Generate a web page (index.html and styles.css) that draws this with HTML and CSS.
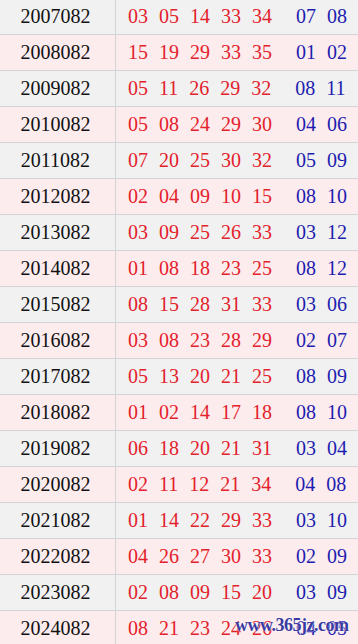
FILE: index.html
```html
<!DOCTYPE html>
<html>
<head>
<meta charset="utf-8">
<link rel="stylesheet" href="styles.css">
</head>
<body>
<div class="table">
  <div class="row odd"><div class="date">2007082</div><div class="nums"><span class="r">03</span><span class="r">05</span><span class="r">14</span><span class="r">33</span><span class="r">34</span><span class="b first">07</span><span class="b">08</span></div></div>
  <div class="row even"><div class="date">2008082</div><div class="nums"><span class="r">15</span><span class="r">19</span><span class="r">29</span><span class="r">33</span><span class="r">35</span><span class="b first">01</span><span class="b">02</span></div></div>
  <div class="row odd"><div class="date">2009082</div><div class="nums"><span class="r">05</span><span class="r">11</span><span class="r">26</span><span class="r">29</span><span class="r">32</span><span class="b first">08</span><span class="b">11</span></div></div>
  <div class="row even"><div class="date">2010082</div><div class="nums"><span class="r">05</span><span class="r">08</span><span class="r">24</span><span class="r">29</span><span class="r">30</span><span class="b first">04</span><span class="b">06</span></div></div>
  <div class="row odd"><div class="date">2011082</div><div class="nums"><span class="r">07</span><span class="r">20</span><span class="r">25</span><span class="r">30</span><span class="r">32</span><span class="b first">05</span><span class="b">09</span></div></div>
  <div class="row even"><div class="date">2012082</div><div class="nums"><span class="r">02</span><span class="r">04</span><span class="r">09</span><span class="r">10</span><span class="r">15</span><span class="b first">08</span><span class="b">10</span></div></div>
  <div class="row odd"><div class="date">2013082</div><div class="nums"><span class="r">03</span><span class="r">09</span><span class="r">25</span><span class="r">26</span><span class="r">33</span><span class="b first">03</span><span class="b">12</span></div></div>
  <div class="row even"><div class="date">2014082</div><div class="nums"><span class="r">01</span><span class="r">08</span><span class="r">18</span><span class="r">23</span><span class="r">25</span><span class="b first">08</span><span class="b">12</span></div></div>
  <div class="row odd"><div class="date">2015082</div><div class="nums"><span class="r">08</span><span class="r">15</span><span class="r">28</span><span class="r">31</span><span class="r">33</span><span class="b first">03</span><span class="b">06</span></div></div>
  <div class="row even"><div class="date">2016082</div><div class="nums"><span class="r">03</span><span class="r">08</span><span class="r">23</span><span class="r">28</span><span class="r">29</span><span class="b first">02</span><span class="b">07</span></div></div>
  <div class="row odd"><div class="date">2017082</div><div class="nums"><span class="r">05</span><span class="r">13</span><span class="r">20</span><span class="r">21</span><span class="r">25</span><span class="b first">08</span><span class="b">09</span></div></div>
  <div class="row even"><div class="date">2018082</div><div class="nums"><span class="r">01</span><span class="r">02</span><span class="r">14</span><span class="r">17</span><span class="r">18</span><span class="b first">08</span><span class="b">10</span></div></div>
  <div class="row odd"><div class="date">2019082</div><div class="nums"><span class="r">06</span><span class="r">18</span><span class="r">20</span><span class="r">21</span><span class="r">31</span><span class="b first">03</span><span class="b">04</span></div></div>
  <div class="row even"><div class="date">2020082</div><div class="nums"><span class="r">02</span><span class="r">11</span><span class="r">12</span><span class="r">21</span><span class="r">34</span><span class="b first">04</span><span class="b">08</span></div></div>
  <div class="row odd"><div class="date">2021082</div><div class="nums"><span class="r">01</span><span class="r">14</span><span class="r">22</span><span class="r">29</span><span class="r">33</span><span class="b first">03</span><span class="b">10</span></div></div>
  <div class="row even"><div class="date">2022082</div><div class="nums"><span class="r">04</span><span class="r">26</span><span class="r">27</span><span class="r">30</span><span class="r">33</span><span class="b first">02</span><span class="b">09</span></div></div>
  <div class="row odd"><div class="date">2023082</div><div class="nums"><span class="r">02</span><span class="r">08</span><span class="r">09</span><span class="r">15</span><span class="r">20</span><span class="b first">03</span><span class="b">09</span></div></div>
  <div class="row even"><div class="date">2024082</div><div class="nums"><span class="r">08</span><span class="r">21</span><span class="r">23</span><span class="r">24</span><span class="r">26</span><span class="b first">04</span><span class="b">05</span></div></div>
</div>
<div class="watermark">www.365jz.com</div>
</body>
</html>
```

FILE: styles.css
```css
html, body {
  margin: 0;
  padding: 0;
  overflow: hidden;
  background: #ffffff;
}

.table {
  margin-top: -1px;
  font-family: "Liberation Serif", "DejaVu Serif", serif;
  font-size: 20px;
}

.row {
  display: flex;
  height: 35px;
  border-bottom: 1px solid #d4d4d4;
  align-items: stretch;
}

.row.odd {
  background: #f1f1f1;
}

.row.even {
  background: #fdeced;
}

.date {
  width: 116px;
  border-right: 1px solid #d4d4d4;
  display: flex;
  align-items: center;
  justify-content: center;
  padding-right: 4px;
  box-sizing: border-box;
  color: #111111;
}

.nums {
  flex: 1;
  display: flex;
  align-items: center;
  padding-left: 12px;
  gap: 11px;
}

.r {
  color: #e3222c;
}

.b {
  color: #1d1db0;
}

.b.first {
  margin-left: 13px;
}

.watermark {
  position: absolute;
  left: 235px;
  top: 615px;
  font-family: "Liberation Serif", "DejaVu Serif", serif;
  font-size: 18px;
  font-weight: bold;
  color: #3a3aa0;
  text-shadow: 0 0 2px #ffffff, 0 0 1px #ffffff;
  letter-spacing: -0.5px;
}
```
